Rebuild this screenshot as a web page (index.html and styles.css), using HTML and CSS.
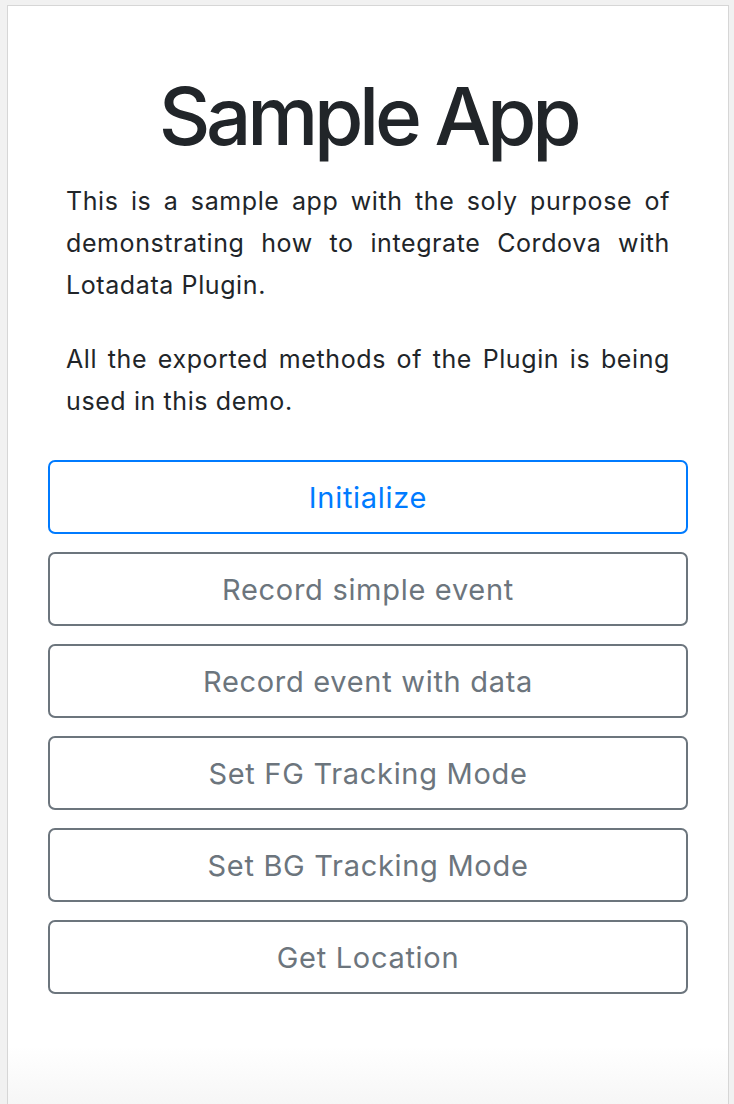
FILE: index.html
```html
<!DOCTYPE html>
<html lang="en">
<head>
<meta charset="utf-8">
<title>Sample App</title>
<link rel="stylesheet" href="styles.css">
</head>
<body>
<div class="card">
  <h1 class="title">Sample App</h1>
  <div class="intro">
    <p>This is a sample app with the soly purpose of demonstrating how to integrate Cordova with Lotadata Plugin.</p>
    <p>All the exported methods of the Plugin is being used in this demo.</p>
  </div>
  <div class="actions">
    <button class="btn btn-primary">Initialize</button>
    <button class="btn">Record simple event</button>
    <button class="btn">Record event with data</button>
    <button class="btn">Set FG Tracking Mode</button>
    <button class="btn">Set BG Tracking Mode</button>
    <button class="btn">Get Location</button>
  </div>
</div>
</body>
</html>
```

FILE: styles.css
```css
html, body {
  margin: 0;
  padding: 0;
  height: 100%;
  overflow: hidden;
}
body {
  background: #f1f1f1;
  font-family: Inter, "Liberation Sans", sans-serif;
  color: #212529;
}
.card {
  margin: 5px 0 0 7px;
  min-height: 1200px;
  border: 1px solid #d6d6d6;
  background: linear-gradient(#ffffff 1040px, #f6f6f6 1100px);
  padding: 62px 40px 0;
  box-sizing: content-box;
  width: 640px;
}
.title {
  margin: 0;
  font-size: 80px;
  line-height: 96px;
  font-weight: 500;
  text-align: center;
  letter-spacing: -4.3px;
}
.intro {
  margin-top: 16px;
  padding: 0 18px;
}
.intro p {
  margin: 0;
  font-size: 25px;
  line-height: 42px;
  text-align: justify;
  letter-spacing: 0.6px;
}
.intro p + p {
  margin-top: 32px;
}
.actions {
  margin-top: 38px;
  display: flex;
  flex-direction: column;
  gap: 18px;
}
.btn {
  height: 74px;
  width: 100%;
  border: 2px solid #6c757d;
  border-radius: 7px;
  background: #fff;
  color: #6c757d;
  font-family: Inter, "Liberation Sans", sans-serif;
  font-size: 29px;
  letter-spacing: 0.7px;
  padding: 0;
  display: flex;
  align-items: center;
  justify-content: center;
}
.btn-primary {
  border-color: #007bff;
  color: #007bff;
}
```
